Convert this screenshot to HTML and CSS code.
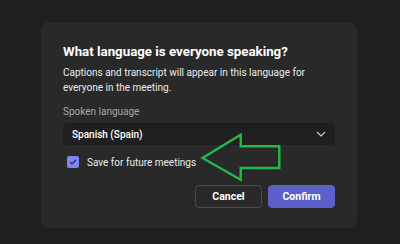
FILE: index.html
```html
<!DOCTYPE html>
<html>
<head>
<meta charset="utf-8">
<link rel="stylesheet" href="styles.css">
</head>
<body>
<div class="dialog">
  <h1 class="title">What language is everyone speaking?</h1>
  <p class="desc">Captions and transcript will appear in this language for everyone in the meeting.</p>
  <div class="label">Spoken language</div>
  <div class="select">
    <span class="select-value">Spanish (Spain)</span>
    <svg class="chevron" width="10" height="6" viewBox="0 0 10 6"><path d="M1 1 L5 5 L9 1" fill="none" stroke="#d0d0d0" stroke-width="1.1"/></svg>
  </div>
  <div class="check-row">
    <span class="checkbox"><svg width="8" height="6" viewBox="0 0 8 6"><path d="M1 3 L3 5 L7 1" fill="none" stroke="#2b2b50" stroke-width="1.2"/></svg></span>
    <span class="check-label">Save for future meetings</span>
  </div>
  <div class="actions">
    <button class="btn btn-cancel">Cancel</button>
    <button class="btn btn-confirm">Confirm</button>
  </div>
</div>
<svg class="arrow" width="400" height="244" viewBox="0 0 400 244"><path d="M202.5 158 L240.7 134.7 L240.7 146.3 L279.3 146.3 L279.3 168 L240.7 168 L240.7 179.7 Z" fill="none" stroke="#22b84b" stroke-width="2.4" stroke-linejoin="miter"/></svg>
</body>
</html>
```
FILE: styles.css
```css
html, body {
  margin: 0;
  padding: 0;
  background: #1f1f1f;
  width: 400px;
  height: 244px;
  overflow: hidden;
  font-family: Roboto, "Noto Sans", sans-serif;
}
.dialog {
  box-sizing: border-box;
  margin: 22px 0 0 41px;
  width: 316px;
  height: 206px;
  background: #292929;
  border-radius: 8px;
  padding: 20px 22px 0 22px;
  color: #ffffff;
}
.title {
  margin: 0;
  font-size: 13.3px;
  font-weight: 700;
  line-height: 20px;
  white-space: nowrap;
}
.desc {
  margin: 3px 0 0 0;
  font-size: 10px;
  line-height: 15px;
  color: #ececec;
  width: 272px;
}
.label {
  margin-top: 9px;
  font-size: 10px;
  line-height: 16px;
  color: #a8a8a8;
}
.select {
  margin-top: 3px;
  height: 22px;
  background: #1f1f1f;
  border-radius: 4px;
  display: flex;
  align-items: center;
  justify-content: space-between;
  padding: 0 8px 0 9px;
}
.select-value {
  font-size: 10px;
  font-weight: 500;
  color: #ffffff;
}
.chevron {
  margin-right: 1px;
}
.check-row {
  margin-top: 11px;
  display: flex;
  align-items: center;
  padding-left: 4px;
  height: 12px;
}
.checkbox {
  width: 12px;
  height: 12px;
  border-radius: 2px;
  background: #7f85f5;
  display: flex;
  align-items: center;
  justify-content: center;
}
.check-label {
  margin-left: 8px;
  font-size: 10px;
  color: #ececec;
}
.actions {
  margin-top: 17px;
  display: flex;
  justify-content: flex-end;
  gap: 6px;
}
.btn {
  box-sizing: border-box;
  width: 67px;
  height: 23px;
  border-radius: 4px;
  font-family: inherit;
  font-size: 10.5px;
  font-weight: 700;
  color: #ffffff;
  padding: 0;
}
.btn-cancel {
  background: #292929;
  border: 1px solid #4a4a4a;
}
.btn-confirm {
  background: #5b5fc7;
  border: 1px solid #5b5fc7;
}
.arrow {
  position: absolute;
  left: 0;
  top: 0;
  pointer-events: none;
}
```
